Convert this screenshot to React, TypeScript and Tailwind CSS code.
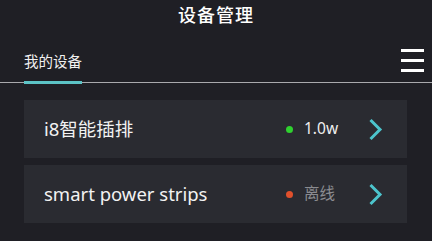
const font = { fontFamily: '"Noto Sans", "Noto Sans CJK SC", sans-serif' };

type Device = { name: string; online: boolean; status: string };

const devices: Device[] = [
  { name: "i8智能插排", online: true, status: "1.0w" },
  { name: "smart power strips", online: false, status: "离线" },
];

const Chevron = () => (
  <svg width="15" height="23" viewBox="0 0 15 23" fill="none">
    <path d="M2.5 2 L12 11.5 L2.5 21" stroke="#4cc4cc" strokeWidth="3" />
  </svg>
);

const DeviceRow = ({ device }: { device: Device }) => (
  <div className="flex h-[58px] items-center bg-[#2a2b31] pl-5 pr-[24px]">
    <span className="flex-1 text-[18.5px] text-[#f2f2f2]">{device.name}</span>
    <span
      className={
        device.online
          ? "h-[7px] w-[7px] rounded-full bg-[#2fd12f]"
          : "h-[7px] w-[7px] rounded-full bg-[#e0502c]"
      }
    />
    <span
      className={
        device.online
          ? "ml-[11px] w-[64px] text-[15.5px] text-[#eeeeee]"
          : "ml-[11px] w-[64px] text-[15.5px] text-[#8a8b90]"
      }
    >
      {device.status}
    </span>
    <Chevron />
  </div>
);

export default function App() {
  return (
    <div className="h-[241px] w-[432px] overflow-hidden bg-[#1f1f25]" style={font}>
      <div className="flex h-[30px] items-center justify-center">
        <h1 className="text-[18px] font-medium tracking-[1px] text-white">设备管理</h1>
      </div>
      <div className="relative flex h-[53px] items-end border-b border-[#a9a9ad] px-6">
        <div className="flex-1">
          <div className="relative inline-block pb-[9px] text-[14.5px] text-[#f0f0f0]">
            我的设备
            <div className="absolute -bottom-[2px] left-0 right-0 h-[3px] bg-[#5cc3c6]" />
          </div>
        </div>
        <div className="mb-[10px] mr-[-16px] flex w-[23px] flex-col gap-[7px]">
          <div className="h-[3px] bg-white" />
          <div className="h-[3px] bg-white" />
          <div className="h-[3px] bg-white" />
        </div>
      </div>
      <div className="flex flex-col gap-[7px] px-6 pt-[17px] pr-[25px]">
        {devices.map((d) => (
          <DeviceRow key={d.name} device={d} />
        ))}
      </div>
    </div>
  );
}
